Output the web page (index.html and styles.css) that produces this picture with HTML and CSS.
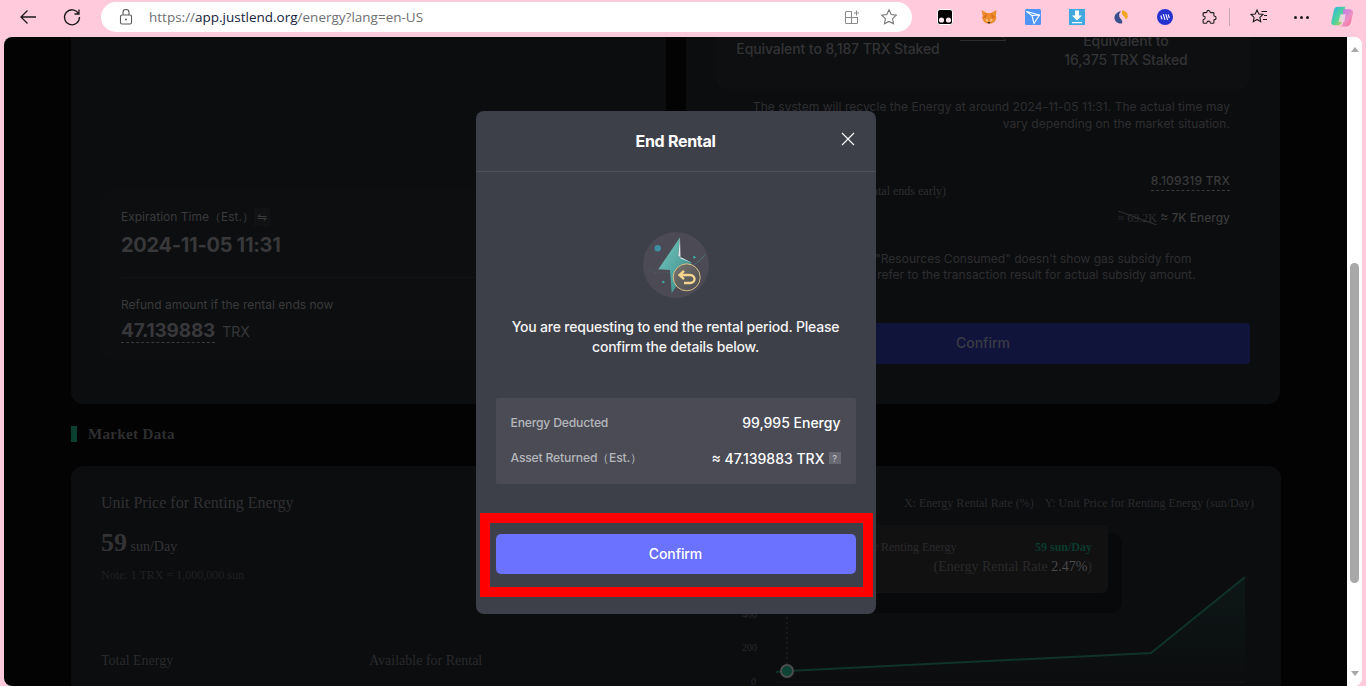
FILE: index.html
```html
<!DOCTYPE html>
<html lang="en">
<head>
<meta charset="utf-8">
<title>JustLend Energy</title>
<link rel="stylesheet" href="styles.css">
</head>
<body>
<header class="toolbar">
  <div class="nav">
    <svg class="ico" viewBox="0 0 20 20"><path d="M18 10H3M9.500 3.500 3 10l6.500 6.500" fill="none" stroke="#1b1b1b" stroke-width="1.300"/></svg>
    <svg class="ico" viewBox="0 0 20 20"><path d="M16.500 6.500A7.500 7.500 0 1 0 17.500 10M17 2.500v4.500h-4.500" fill="none" stroke="#1b1b1b" stroke-width="1.300"/></svg>
  </div>
  <div class="omnibox">
    <svg class="lock" viewBox="0 0 14 16"><rect x="1.500" y="6" width="11" height="9" rx="1.500" fill="none" stroke="#5c5c5c" stroke-width="1.100"/><path d="M4 6V3.500a3 3 0 0 1 6 0V6" fill="none" stroke="#5c5c5c" stroke-width="1.100"/><circle cx="7" cy="10.500" r="1" fill="#5c5c5c"/></svg>
    <div class="url">https://<b>app.justlend.org</b>/energy?lang=en-US</div>
    <svg class="ico-o" viewBox="0 0 16 16"><path d="M7.500 2.500H2.500a1 1 0 0 0-1 1v10a1 1 0 0 0 1 1h10a1 1 0 0 0 1-1V8.500H1.500M7.500 2.500v12M10 4h5M12.500 1.500v5" fill="none" stroke="#8b8b8b" stroke-width="1.100"/></svg>
    <svg class="ico-o star" viewBox="0 0 18 18"><path d="M9 1.800l2.200 4.700 5.100.7-3.700 3.500.9 5.100L9 13.400l-4.500 2.400.9-5.100-3.700-3.500 5.100-.7z" fill="none" stroke="#777" stroke-width="1.100"/></svg>
  </div>
  <div class="tools">
    <svg class="ext" viewBox="0 0 16 16"><rect x=".5" y=".5" width="15" height="15" rx="2.500" fill="#000" stroke="#fff"/><circle cx="4.500" cy="11" r="2.600" fill="#fde9f0"/><circle cx="11.500" cy="11" r="2.600" fill="#fde9f0"/></svg>
    <svg class="ext" viewBox="0 0 16 16"><path d="M.5 1l5.500 3h4l5.500-3-.7 6 .7 2-2 4-3 1.500H6L3 13l-2-4 .7-2z" fill="#ee8d2e"/><path d="M6 4l-1 5-3.500-.5zM10 4l1 5 3.500-.5z" fill="#d9701d"/><path d="M6.200 13h3.600L8 15z" fill="#3a3026"/><path d="M5 9.500l2 1.500v2L4.500 11.500zM11 9.500L9 11v2l2.500-1.500z" fill="#f6c08a"/></svg>
    <svg class="ext" viewBox="0 0 16 16"><rect width="16" height="16" rx="1.500" fill="#4f95f6"/><path d="M1.500 2.500 14.500 6 9 14.500 7 6.500zM7 6.500l7.500-.5M7 6.500 9 14.500" fill="none" stroke="#fff" stroke-width="1.100"/></svg>
    <svg class="ext" viewBox="0 0 16 16"><rect width="16" height="16" fill="#41a9e0"/><path d="M6 1.500h4v5h3l-5 5-5-5h3zM3 13h10v1.300H3z" fill="#fff"/></svg>
    <svg class="ext" viewBox="0 0 16 16"><path d="M8 2C4 3 1 6 1.500 9.500 2 13 5.500 15 9 14.500c1-2.500-.5-4-2-5.500C5.500 7 6 4 8 2z" fill="#3a4f8c"/><path d="M9 1.500c3.500 0 6 2.500 5.800 6-.1 1.500-1 2.500-2 3-.3-2-2-3-3-4.200C9 5.500 8.500 3.500 9 1.500z" fill="#f5a623"/></svg>
    <svg class="ext" viewBox="0 0 16 16"><circle cx="8" cy="8" r="8" fill="#2532cf"/><path d="M3.800 6.500l1.200 3.800M6.200 5.200l1.800 5.600M8.800 5.200l1.800 5.600M11.200 5.500l1.100 3.500" stroke="#fff" stroke-width="1.100" fill="none"/></svg>
    <svg class="ext" viewBox="0 0 16 16"><path d="M6 2.600C6 1 9 1 9 2.800c0 .5.300.8.800.8h2.200c.5 0 .9.400.9.900v2c0 .5.400.8.900.8 1.700 0 1.700 3.300 0 3.300-.5 0-.9.300-.9.800v2c0 .500-.4.900-.9.900h-2c-.5 0-.8-.4-.8-.9 0-1.700-3.300-1.700-3.300 0 0 .5-.3.900-.8.900h-2c-.5 0-1-.4-1-.9V11c0-.5.400-.8.900-.8 1.500-.1 1.500-2.900 0-3-.5 0-.9-.3-.9-.8V4.500c0-.5.500-.9 1-.9h2.100c.5 0 .8-.4.800-1z" fill="none" stroke="#1b1b1b" stroke-width="1.100"/></svg>
    <i class="sep"></i>
    <svg class="ext fav" viewBox="0 0 18 18"><path d="M7 2l1.800 4 4.200.5-3.100 2.900.8 4.300L7 11.500l-3.700 2.200.8-4.300L1 6.500 5.200 6zM11.500 3.500H17M14 7.500h3M13 11.500h4" fill="none" stroke="#1b1b1b" stroke-width="1.100"/></svg>
    <div class="dots"><i></i><i></i><i></i></div>
    <svg class="copilot" viewBox="0 0 22 22"><defs><linearGradient id="cp1" x1="0" y1="0" x2="1" y2="1"><stop offset="0" stop-color="#2fb4ea"/><stop offset=".55" stop-color="#4fd39a"/><stop offset="1" stop-color="#f7c53f"/></linearGradient><linearGradient id="cp2" x1="0" y1="0" x2="1" y2="1"><stop offset="0" stop-color="#a77bf3"/><stop offset=".6" stop-color="#f08fc0"/><stop offset="1" stop-color="#f3668c"/></linearGradient></defs><path d="M7 1.500h7l-3 14c-.4 1.600-1.500 3-3.500 3H3.500C1.500 18.500.8 17 1.300 15L3.500 5C4 3 5 1.500 7 1.500z" fill="url(#cp1)"/><path d="M12 4h5.500c2.500 0 4 1.500 3.500 3.800l-1.800 8c-.5 2-2 4-4.500 4H8.500c2 0 3-1.500 3.500-3.500z" fill="url(#cp2)"/><path d="M9.500 8.500h5l-1.500 7h-5z" fill="#f6d8ea" opacity=".8"/></svg>
  </div>
</header>

<div class="viewport">
  <main class="page">
    <section class="top-row">
      <article class="card left-card">
        <div class="panel">
          <div class="label">Expiration Time（Est.）<span class="swap">⇋</span></div>
          <div class="big date">2024-11-05 11:31</div>
          <hr class="rule">
          <div class="label">Refund amount if the rental ends now</div>
          <div class="refund"><span class="big dashed">47.139883</span><span class="trx">TRX</span></div>
        </div>
      </article>
      <article class="card right-card">
        <div class="stake">
          <div class="stake-col one-line">Equivalent to 8,187 TRX Staked</div>
          <svg class="stake-arrow" viewBox="0 0 46 6"><path d="M0 5.500h46L41 .5" fill="none" stroke="#2b2c2e"/></svg>
          <div class="stake-col two-line">Equivalent to<br>16,375 TRX Staked</div>
        </div>
        <p class="recycle">The system will recycle the Energy at around 2024-11-05 11:31. The actual time may vary depending on the market situation.</p>
        <div class="row first-row">
          <span class="serif-note">Rental deposit (if the rental ends early)</span>
          <span class="dashed amount">8.109319 TRX</span>
        </div>
        <div class="row second-row">
          <span class="serif-note">Resources</span>
          <span class="amount"><s class="struck">≈ 69.2K</s> ≈ 7K Energy</span>
        </div>
        <p class="note">Note: TronLink shows "Resources Consumed" doesn't show gas subsidy from<br>JustLend DAO, please refer to the transaction result for actual subsidy amount.</p>
        <div class="dim-btn">Confirm</div>
      </article>
    </section>

    <h2 class="section-title">Market Data</h2>

    <section class="card market">
      <div class="market-left">
        <h3 class="price-title">Unit Price for Renting Energy</h3>
        <div class="price"><b>59</b> sun/Day</div>
        <div class="price-note">Note: 1 TRX = 1,000,000 sun</div>
        <div class="totals"><span>Total Energy</span><span>Available for Rental</span></div>
      </div>
      <div class="market-right">
        <div class="legend"><span>X: Energy Rental Rate (%)</span><span>Y: Unit Price for Renting Energy (sun/Day)</span></div>
        <div class="chart">
          <svg class="chart-svg" viewBox="0 0 530 180">
            <defs><linearGradient id="area" x1="0" y1="0" x2="0" y2="1"><stop offset="0" stop-color="#0f2a24"/><stop offset="1" stop-color="#0c0d0f"/></linearGradient></defs>
            <path d="M45 164 420 146 514 70V175H45z" fill="url(#area)" opacity=".35"/>
            <path d="M56 20V158" stroke="#26272a" stroke-dasharray="2 3"/>
            <path d="M45 175H514" stroke="#17181a"/>
            <text x="20" y="178" class="axis">0</text>
            <text x="11" y="144" class="axis">200</text>
            <text x="11" y="111" class="axis">400</text>
            <path d="M45 165 56 164 420 146 514 70" fill="none" stroke="#103329" stroke-width="2"/>
            <circle cx="56" cy="164" r="6" fill="#0d4234" stroke="#4a4d4c" stroke-width="2"/>
          </svg>
          <div class="tip">
            <div class="tip-row"><span>Unit Price for Renting Energy</span><b>59 sun/Day</b></div>
            <div class="tip-rate">(Energy Rental Rate <em>2.47%</em>)</div>
          </div>
        </div>
      </div>
    </section>

    <div class="overlay">
      <div class="modal">
        <div class="modal-head">
          <h1>End Rental</h1>
          <svg class="close" viewBox="0 0 14 14"><path d="M1 1l12 12M13 1 1 13" stroke="#fff" stroke-width="1.100" fill="none"/></svg>
        </div>
        <div class="modal-body">
          <svg class="hero" viewBox="0 0 66 66">
            <defs>
              <linearGradient id="bolt" x1="0" y1="0" x2="1" y2="1"><stop offset="0" stop-color="#7cc9c2"/><stop offset="1" stop-color="#2f8581"/></linearGradient>
              <linearGradient id="coin" x1="0" y1="0" x2="1" y2="1"><stop offset="0" stop-color="#77766f"/><stop offset="1" stop-color="#4b4a50"/></linearGradient>
            </defs>
            <circle cx="33" cy="33" r="33" fill="#4b4a55"/>
            <circle cx="14.700" cy="16.300" r="3.200" fill="#3f8ea3"/>
            <circle cx="51.300" cy="25.300" r="1.300" fill="#3aa79d"/>
            <circle cx="20.300" cy="50" r="1.300" fill="#3aa79d"/>
            <path d="M37 5.300 15.300 37.300 27 38 28.700 61.300 48.700 30.700 35.300 24z" fill="url(#bolt)"/>
            <path d="M37 5.300 35.300 24 48.700 30.700 37.500 26.500z" fill="#dfe8ea"/>
            <path d="M5 38c10 5 42 6 58-17-4 10-24 20-40 20C14 41 8 40 5 38z" fill="#4fb3ad" opacity=".65"/>
            <circle cx="43.700" cy="45.300" r="13.500" fill="url(#coin)" stroke="#d9c084" stroke-width="1"/>
            <path d="M37 43h10c6 0 6 8 0 8h-6M41 38.800l-4.500 4.200 4.500 4.200" fill="none" stroke="#f3d48f" stroke-width="2.400"/>
          </svg>
          <p class="lead">You are requesting to end the rental period. Please confirm the details below.</p>
          <div class="info">
            <div class="info-row"><span>Energy Deducted</span><b>99,995 Energy</b></div>
            <div class="info-row"><span>Asset Returned（Est.）</span><b>≈ 47.139883 TRX <i class="q">?</i></b></div>
          </div>
          <button class="confirm" type="button">Confirm</button>
        </div>
        <div class="highlight"></div>
      </div>
    </div>
  </main>
  <aside class="scrollbar">
    <i class="arrow-up"></i>
    <i class="thumb"></i>
    <i class="arrow-down"></i>
  </aside>
</div>
</body>
</html>
```
FILE: styles.css
```css
* { box-sizing: border-box; }
html, body { height: 100%; }
body {
  margin: 0;
  height: 686px;
  overflow: hidden;
  background: #ffcbdc;
  font-family: "Inter", "Liberation Sans", sans-serif;
}

/* browser chrome */
.toolbar { height: 37px; display: flex; align-items: flex-start; padding-top: 2px; }
.nav { width: 101px; display: flex; gap: 24px; padding: 5px 0 0 18px; }
.ico { width: 20px; height: 20px; display: block; }
.omnibox {
  width: 811px; height: 30px; background: #fff; border-radius: 15px;
  display: flex; align-items: center; padding: 0 14px 0 18px;
}
.lock { width: 14px; height: 16px; margin-right: 16px; }
.url { flex: 1; font: 13.5px "Open Sans", sans-serif; color: #6f7072; }
.url b { font-weight: 400; color: #14223c; }
.ico-o { width: 16px; height: 16px; margin-right: 20px; }
.ico-o.star { width: 18px; height: 18px; margin-right: 0; }
.tools { flex: 1; display: flex; align-items: center; height: 30px; padding-left: 25px; }
.ext { width: 16px; height: 16px; margin-right: 28px; flex: none; }
.sep { width: 1px; height: 18px; background: #c9a5b2; margin: 0 20px 0 -16px; flex: none; }
.fav { width: 18px; height: 18px; margin-right: 26px; }
.dots { display: flex; gap: 3px; width: 15px; margin: 0 21px 0 0; flex: none; }
.dots i { width: 3px; height: 3px; border-radius: 50%; background: #1b1b1b; flex: none; }
.copilot { width: 24px; height: 24px; flex: none; }

/* viewport */
.viewport {
  height: 649px; margin: 0 4px; display: flex;
  border-radius: 8px; overflow: hidden; background: #fff;
}
.page {
  position: relative; flex: 1; overflow: hidden; background: #030304;
  padding: 0 66px 0 67px; display: flex; flex-direction: column;
}
.scrollbar { width: 15px; flex: none; display: flex; flex-direction: column; align-items: center; background: #fff; }
.arrow-up { margin-top: 10px; border: 4px solid transparent; border-top: 0; border-bottom: 5px solid #a8a8a8; }
.thumb { width: 9px; height: 320px; margin: 211px 0 88px; background: #a8a8a8; border-radius: 5px; }
.arrow-down { border: 4px solid transparent; border-bottom: 0; border-top: 5px solid #a8a8a8; }

/* dimmed page */
.card { background: #0c0d0f; border-radius: 12px; }
.top-row { display: flex; gap: 20px; height: 367px; flex: none; }
.left-card {
  width: 595px; padding: 0 30px 44px; display: flex; flex-direction: column; justify-content: flex-end;
  border-radius: 0 0 12px 12px;
}
.panel { background: #0d0e10; border-radius: 10px; padding: 20px 0 0 20px; height: 172px; }
.label { font-size: 12px; line-height: 18px; color: #3a3a3b; }
.swap { display: inline-block; width: 16px; text-align: center; background: #111214; font-size: 12px; }
.big { font-size: 19px; font-weight: 700; color: #38383a; line-height: 22px; letter-spacing: -.2px; }
.date { font-size: 20px; line-height: 24px; margin-top: 7px; letter-spacing: -.3px; }
.rule { border: 0; border-top: 1px solid #131416; margin: 20px 0 18px; }
.refund { display: flex; align-items: baseline; gap: 7px; margin-top: 6px; }
.dashed { border-bottom: 1px dashed #3a3a3b; }
.trx { font-size: 14px; color: #38383a; }
.right-card {
  width: 594px; padding: 0 30px; border-radius: 0 0 12px 12px; display: flex; flex-direction: column;
}
.stake {
  height: 52px; flex: none; display: flex; background: #0e0f11; border-radius: 0 0 10px 10px;
  font-size: 14px; font-weight: 500; color: #333335; line-height: 19px; text-align: center; letter-spacing: -.1px;
}
.stake-col { align-self: flex-end; }
.one-line { width: 244px; flex: none; padding-bottom: 31px; }
.two-line { flex: 1; padding: 0 4px 20px 0; }
.stake-arrow { width: 46px; height: 6px; flex: none; margin-top: -2px; }
.recycle { margin: 9px 20px 0 20px; font-size: 12px; line-height: 17px; color: #2e2e30; text-align: right; letter-spacing: .05px; }
.row { display: flex; justify-content: space-between; align-items: flex-end; margin-right: 20px; padding-left: 20px; }
.first-row { margin-top: 40px; }
.second-row { margin-top: 18px; }
.serif-note { font: 12px "Liberation Serif", serif; color: #2e2e30; }
.first-row .serif-note { width: 210px; margin-bottom: -8px; text-align: right; white-space: nowrap; }
.second-row .serif-note { visibility: hidden; }
.amount { font-size: 12px; font-weight: 500; color: #3a3a3b; line-height: 18px; }
.first-row .amount { letter-spacing: .15px; }
.struck {
  font: 12px "Liberation Serif", serif; color: #2e2e30; text-decoration: none;
  background: linear-gradient(to top right, transparent 46%, #2e2e30 50%, transparent 54%);
}
.note { margin: 24px 0 0 33px; font-size: 12px; line-height: 16px; color: #2e2e30; white-space: nowrap; }
.dim-btn {
  margin-top: 40px; height: 41px; flex: none; background: #11143a; border-radius: 4px; padding-bottom: 2px;
  display: flex; align-items: center; justify-content: center; font-size: 14px; font-weight: 500; color: #3a3b46;
}
.section-title {
  margin: 22px 0 0; height: 16px; font: 700 15px/16px "Liberation Serif", serif; color: #2f2f30;
  border-left: 6px solid #0b3f30; padding-left: 11px; flex: none; letter-spacing: .35px;
}
.market {
  flex: 1; margin-top: 24px; padding: 28px 27px 0 30px; display: flex;
  border-radius: 12px 12px 0 0; font-family: "Liberation Serif", serif;
}
.market-left { width: 630px; flex: none; }
.price-title { margin: 0; font: 400 16px/18px "Liberation Serif", serif; color: #303032; }
.price { margin-top: 16px; font-size: 14px; line-height: 30px; color: #333335; }
.price b { font-size: 26px; color: #333335; }
.price-note { margin-top: 5px; font-size: 12px; line-height: 16px; color: #212123; }
.totals { margin-top: 69px; display: flex; font-size: 14px; line-height: 18px; color: #2a2a2c; }
.totals span { width: 268px; }
.market-right { flex: 1; }
.legend { display: flex; justify-content: flex-end; gap: 11px; font-size: 12px; line-height: 18px; color: #2a2a2c; }
.chart { position: relative; height: 180px; margin-top: -5px; }
.chart-svg { position: absolute; left: 0; top: 0; width: 530px; height: 180px; }
.axis { font-size: 10px; fill: #2a2a2c; font-family: "Liberation Serif", serif; }
.tip {
  position: absolute; left: 61px; top: 18px; width: 316px; height: 68px; background: #111112; border-radius: 6px;
  padding: 13px 16px 0 20px; box-shadow: 8px 14px 0 6px #08090a;
  font-size: 12px; color: #2a2a2b; white-space: nowrap;
}
.tip-row { display: flex; justify-content: space-between; line-height: 18px; }
.tip-row b { color: #0b3a2c; }
.tip-rate { text-align: right; font-size: 14px; line-height: 20px; margin-top: 1px; }
.tip-rate em { font-style: normal; color: #4a4a4b; }

/* modal */
.overlay { position: absolute; inset: 0; display: flex; align-items: center; justify-content: center; padding-top: 2px; }
.modal {
  position: relative; width: 400px; height: 503px; background: #3e4049; border-radius: 8px;
  display: flex; flex-direction: column; color: #fff;
}
.modal-head {
  height: 61px; flex: none; border-bottom: 1px solid #50525a;
  display: flex; align-items: center; justify-content: center; position: relative;
}
.modal-head h1 { margin: 0; font-size: 16px; font-weight: 700; letter-spacing: -.3px; color: #fff; }
.close { position: absolute; right: 21px; top: 21px; width: 14px; height: 14px; }
.modal-body { flex: 1; padding: 60px 20px 0; display: flex; flex-direction: column; align-items: center; }
.hero { width: 66px; height: 66px; display: block; flex: none; }
.lead { margin: 19px 0 0; font-size: 14px; font-weight: 500; line-height: 20px; text-align: center; color: #f4f4f5; letter-spacing: -.2px; }
.info {
  width: 360px; height: 86px; margin-top: 41px; background: #4a4b55; border-radius: 2px;
  padding: 6px 15px 0 15px; flex: none;
}
.info-row { display: flex; justify-content: space-between; align-items: center; height: 36px; }
.info-row span { font-size: 12.2px; font-weight: 500; color: #b5b6bb; letter-spacing: -.2px; }
.info-row b { font-size: 14px; font-weight: 500; color: #fff; display: flex; align-items: center; gap: 4px; }
.q { width: 12px; height: 12px; background: #686973; font-size: 9px; font-style: normal; color: #c6c6cb; display: flex; align-items: center; justify-content: center; }
.confirm {
  width: 360px; height: 40px; margin-top: 50px; flex: none; border: 0; border-radius: 5px; background: #6a72ff;
  padding: 0 0 2px; font: 500 14px "Inter", sans-serif; color: #fff; letter-spacing: -.1px;
}
.highlight { position: absolute; left: 4px; top: 402px; width: 393px; height: 84px; border: 10px solid #f00; }
```
